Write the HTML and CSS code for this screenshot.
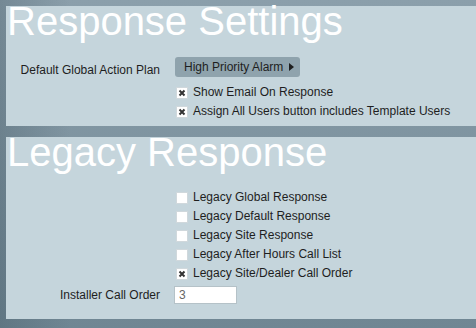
FILE: index.html
```html
<!DOCTYPE html>
<html lang="en">
<head>
  <meta charset="UTF-8">
  <title>Response Settings</title>
  <link rel="stylesheet" href="styles.css">
</head>
<body>

<section class="panel">
  <h1 class="panel-title">Response Settings</h1>
  <div class="form">
    <div class="row">
      <span class="row-label">Default Global Action Plan</span>
      <button class="plan-btn">High Priority Alarm
        <svg width="5" height="8" viewBox="0 0 5 8"><path d="M0 0 L5 4 L0 8 Z" fill="#1e1e1e"/></svg>
      </button>
    </div>
    <div class="row check-row">
      <span class="row-label"></span>
      <label class="check">
        <span class="box"><svg width="8" height="8" viewBox="0 0 8 8"><path d="M1.5 1.5 L6.5 6.5 M6.5 1.5 L1.5 6.5" stroke="#333" stroke-width="2"/></svg></span>
        Show Email On Response
      </label>
    </div>
    <div class="row check-row">
      <span class="row-label"></span>
      <label class="check">
        <span class="box"><svg width="8" height="8" viewBox="0 0 8 8"><path d="M1.5 1.5 L6.5 6.5 M6.5 1.5 L1.5 6.5" stroke="#333" stroke-width="2"/></svg></span>
        Assign All Users button includes Template Users
      </label>
    </div>
  </div>
</section>

<section class="panel panel-legacy">
  <h1 class="panel-title">Legacy Response</h1>
  <div class="form">
    <div class="row check-row">
      <span class="row-label"></span>
      <label class="check"><span class="box"></span>Legacy Global Response</label>
    </div>
    <div class="row check-row">
      <span class="row-label"></span>
      <label class="check"><span class="box"></span>Legacy Default Response</label>
    </div>
    <div class="row check-row">
      <span class="row-label"></span>
      <label class="check"><span class="box"></span>Legacy Site Response</label>
    </div>
    <div class="row check-row">
      <span class="row-label"></span>
      <label class="check"><span class="box"></span>Legacy After Hours Call List</label>
    </div>
    <div class="row check-row">
      <span class="row-label"></span>
      <label class="check">
        <span class="box"><svg width="8" height="8" viewBox="0 0 8 8"><path d="M1.5 1.5 L6.5 6.5 M6.5 1.5 L1.5 6.5" stroke="#333" stroke-width="2"/></svg></span>
        Legacy Site/Dealer Call Order
      </label>
    </div>
    <div class="row input-row">
      <span class="row-label">Installer Call Order</span>
      <input type="text" class="order-input" value="3">
    </div>
  </div>
</section>

</body>
</html>
```

FILE: styles.css
```css
* {
  margin: 0;
  padding: 0;
  box-sizing: border-box;
}

html, body {
  height: 100%;
}

body {
  font-family: "Liberation Sans", Arial, sans-serif;
  font-size: 12px;
  color: #1e1e1e;
  padding: 6px 0 0 6px;
  overflow: hidden;
  background:
    linear-gradient(to right, rgba(50, 70, 82, 0.25), rgba(50, 70, 82, 0) 70px),
    linear-gradient(to bottom, #8b9fab, #6f8693);
}

.panel {
  background: #c5d5dc;
  margin-right: -10px;
  padding-bottom: 5px;
}

.panel-legacy {
  margin-top: 11px;
  padding-bottom: 15px;
}

.panel-title {
  font-size: 40px;
  font-weight: normal;
  line-height: 30px;
  color: #fff;
  padding-left: 1px;
}

.form {
  padding-top: 21px;
}

.row {
  display: grid;
  grid-template-columns: 154px 1fr;
  column-gap: 15px;
  align-items: center;
}

.row-label {
  text-align: right;
}

.plan-btn {
  justify-self: start;
  display: flex;
  align-items: center;
  gap: 6px;
  height: 20px;
  padding: 0 6px 0 9px;
  border: none;
  border-radius: 3px;
  background: #8fa3ad;
  font-family: inherit;
  font-size: 12px;
  color: #1e1e1e;
  margin-bottom: 6px;
}

.check-row {
  height: 19px;
}

.check {
  display: flex;
  align-items: center;
  line-height: 19px;
  padding-left: 1px;
}

.box {
  width: 12px;
  height: 12px;
  margin-right: 5px;
  background: #fff;
  border: 1px solid #d0d8dc;
  display: flex;
  align-items: center;
  justify-content: center;
}

.input-row {
  margin-top: 3px;
}

.order-input {
  width: 63px;
  height: 18px;
  border: 1px solid #b5c2c8;
  background: #fff;
  padding: 0 4px;
  font-family: inherit;
  font-size: 12px;
  color: #666;
  margin-left: -1px;
}
```
